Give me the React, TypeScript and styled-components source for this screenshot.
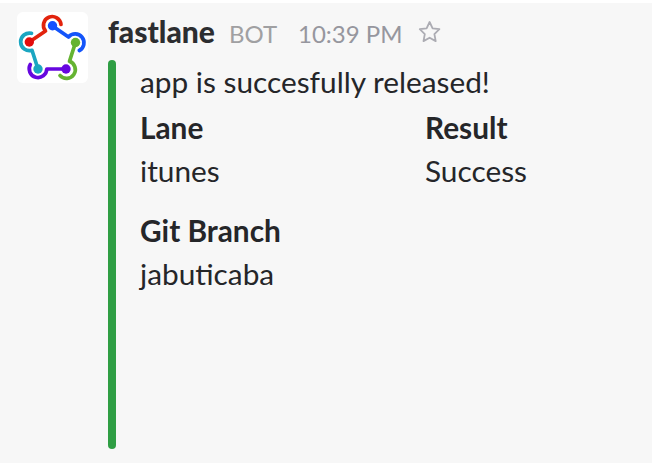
import React from "react";
import styled, { createGlobalStyle } from "styled-components";

const GlobalStyle = createGlobalStyle`
  body {
    margin: 0;
    background: #f7f7f7;
    font-family: Lato, "Liberation Sans", sans-serif;
    font-size: 29.8px;
    color: #252629;
  }
`;

const Message = styled.article`
  box-sizing: border-box;
  display: flex;
  gap: 20px;
  width: 652px;
  height: 463px;
  padding: 9px 0 0 17px;
  border-top: 3px solid #fff;
  background: #f7f7f7;
  overflow: hidden;
`;

const Avatar = styled.div`
  flex: none;
  width: 71px;
  height: 71px;
  border-radius: 6px;
  background: #fff;
`;

const Content = styled.div`
  display: flex;
  flex-direction: column;
  flex: 1;
`;

const Header = styled.header`
  display: flex;
  align-items: baseline;
  height: 48px;
  line-height: 38px;
`;

const Sender = styled.span`
  width: 121px;
  font-weight: 900;
  font-size: 30px;
  color: #2c2d30;
`;

const BotTag = styled.span`
  width: 69px;
  font-size: 24px;
  color: #a0a0a2;
`;

const Time = styled.time`
  width: 120px;
  font-size: 24px;
  color: #96969e;
`;

const Star = styled.svg`
  align-self: flex-start;
  margin-top: 8px;
`;

const Attachment = styled.section`
  display: flex;
  gap: 24px;
`;

const Bar = styled.div`
  width: 8px;
  height: 389px;
  border-radius: 4px;
  background: #2f9e44;
`;

const Body = styled.div`
  flex: 1;
  padding-top: 1px;
`;

const Text = styled.p`
  margin: 0;
  height: 46px;
  line-height: 42px;
  white-space: nowrap;
`;

const Fields = styled.dl`
  display: grid;
  grid-template-columns: 285px 220px;
  row-gap: 16px;
  margin: 0;
`;

const Field = styled.div`
  height: 87px;
`;

const Label = styled.dt`
  height: 43px;
  line-height: 42px;
  font-weight: 700;
`;

const Value = styled.dd`
  margin: 0;
  line-height: 42px;
`;

const fields = [
  { label: "Lane", value: "itunes" },
  { label: "Result", value: "Success" },
  { label: "Git Branch", value: "jabuticaba" },
];

function Logo() {
  return (
    <svg width="71" height="71" viewBox="17 12 71 71" fill="none" strokeWidth="3.7" strokeLinecap="round" strokeLinejoin="round">
      <path d="M29.3 42 45.5 31A8.8 8.8 0 1 1 61 24.5" stroke="#e2230d" />
      <path d="M52.5 26 68.5 37A8.8 8.8 0 1 1 79.3 50.5" stroke="#1455fa" />
      <path d="M75.5 42.5 69.5 61.3A8.8 8.8 0 1 1 60 75.5" stroke="#65b332" />
      <path d="M66 69H46.8A8.8 8.8 0 1 1 30.3 64.5" stroke="#6607df" />
      <path d="M38 69 32 50.3A8.8 8.8 0 1 1 31.5 33.3" stroke="#1ba6c1" />
      <circle cx="29.3" cy="42" r="4.7" fill="#e30c0c" />
      <circle cx="52.5" cy="25.8" r="4.7" fill="#1450ff" />
      <circle cx="75.5" cy="42.5" r="4.7" fill="#65b332" />
      <circle cx="66" cy="69" r="4.7" fill="#6607df" />
      <circle cx="38" cy="69" r="4.7" fill="#1ba6c1" />
    </svg>
  );
}

export default function App() {
  return (
    <>
      <GlobalStyle />
      <Message>
        <Avatar><Logo /></Avatar>
        <Content>
          <Header>
            <Sender>fastlane</Sender>
            <BotTag>BOT</BotTag>
            <Time>10:39 PM</Time>
            <Star width="24" height="24" viewBox="0 0 24 24" fill="none" stroke="#acacb3" strokeWidth="1.8" strokeLinejoin="round">
              <path d="M11.6 2 14.6 8.4 21.4 9.2 16.4 14.1 17.7 21.1 11.6 17.7 5.5 21.1 6.8 14.1 1.8 9.2 8.6 8.4Z" />
            </Star>
          </Header>
          <Attachment>
            <Bar />
            <Body>
              <Text>app is succesfully released!</Text>
              <Fields>
                {fields.map(({ label, value }) => (
                  <Field key={label}>
                    <Label>{label}</Label>
                    <Value>{value}</Value>
                  </Field>
                ))}
              </Fields>
            </Body>
          </Attachment>
        </Content>
      </Message>
    </>
  );
}
